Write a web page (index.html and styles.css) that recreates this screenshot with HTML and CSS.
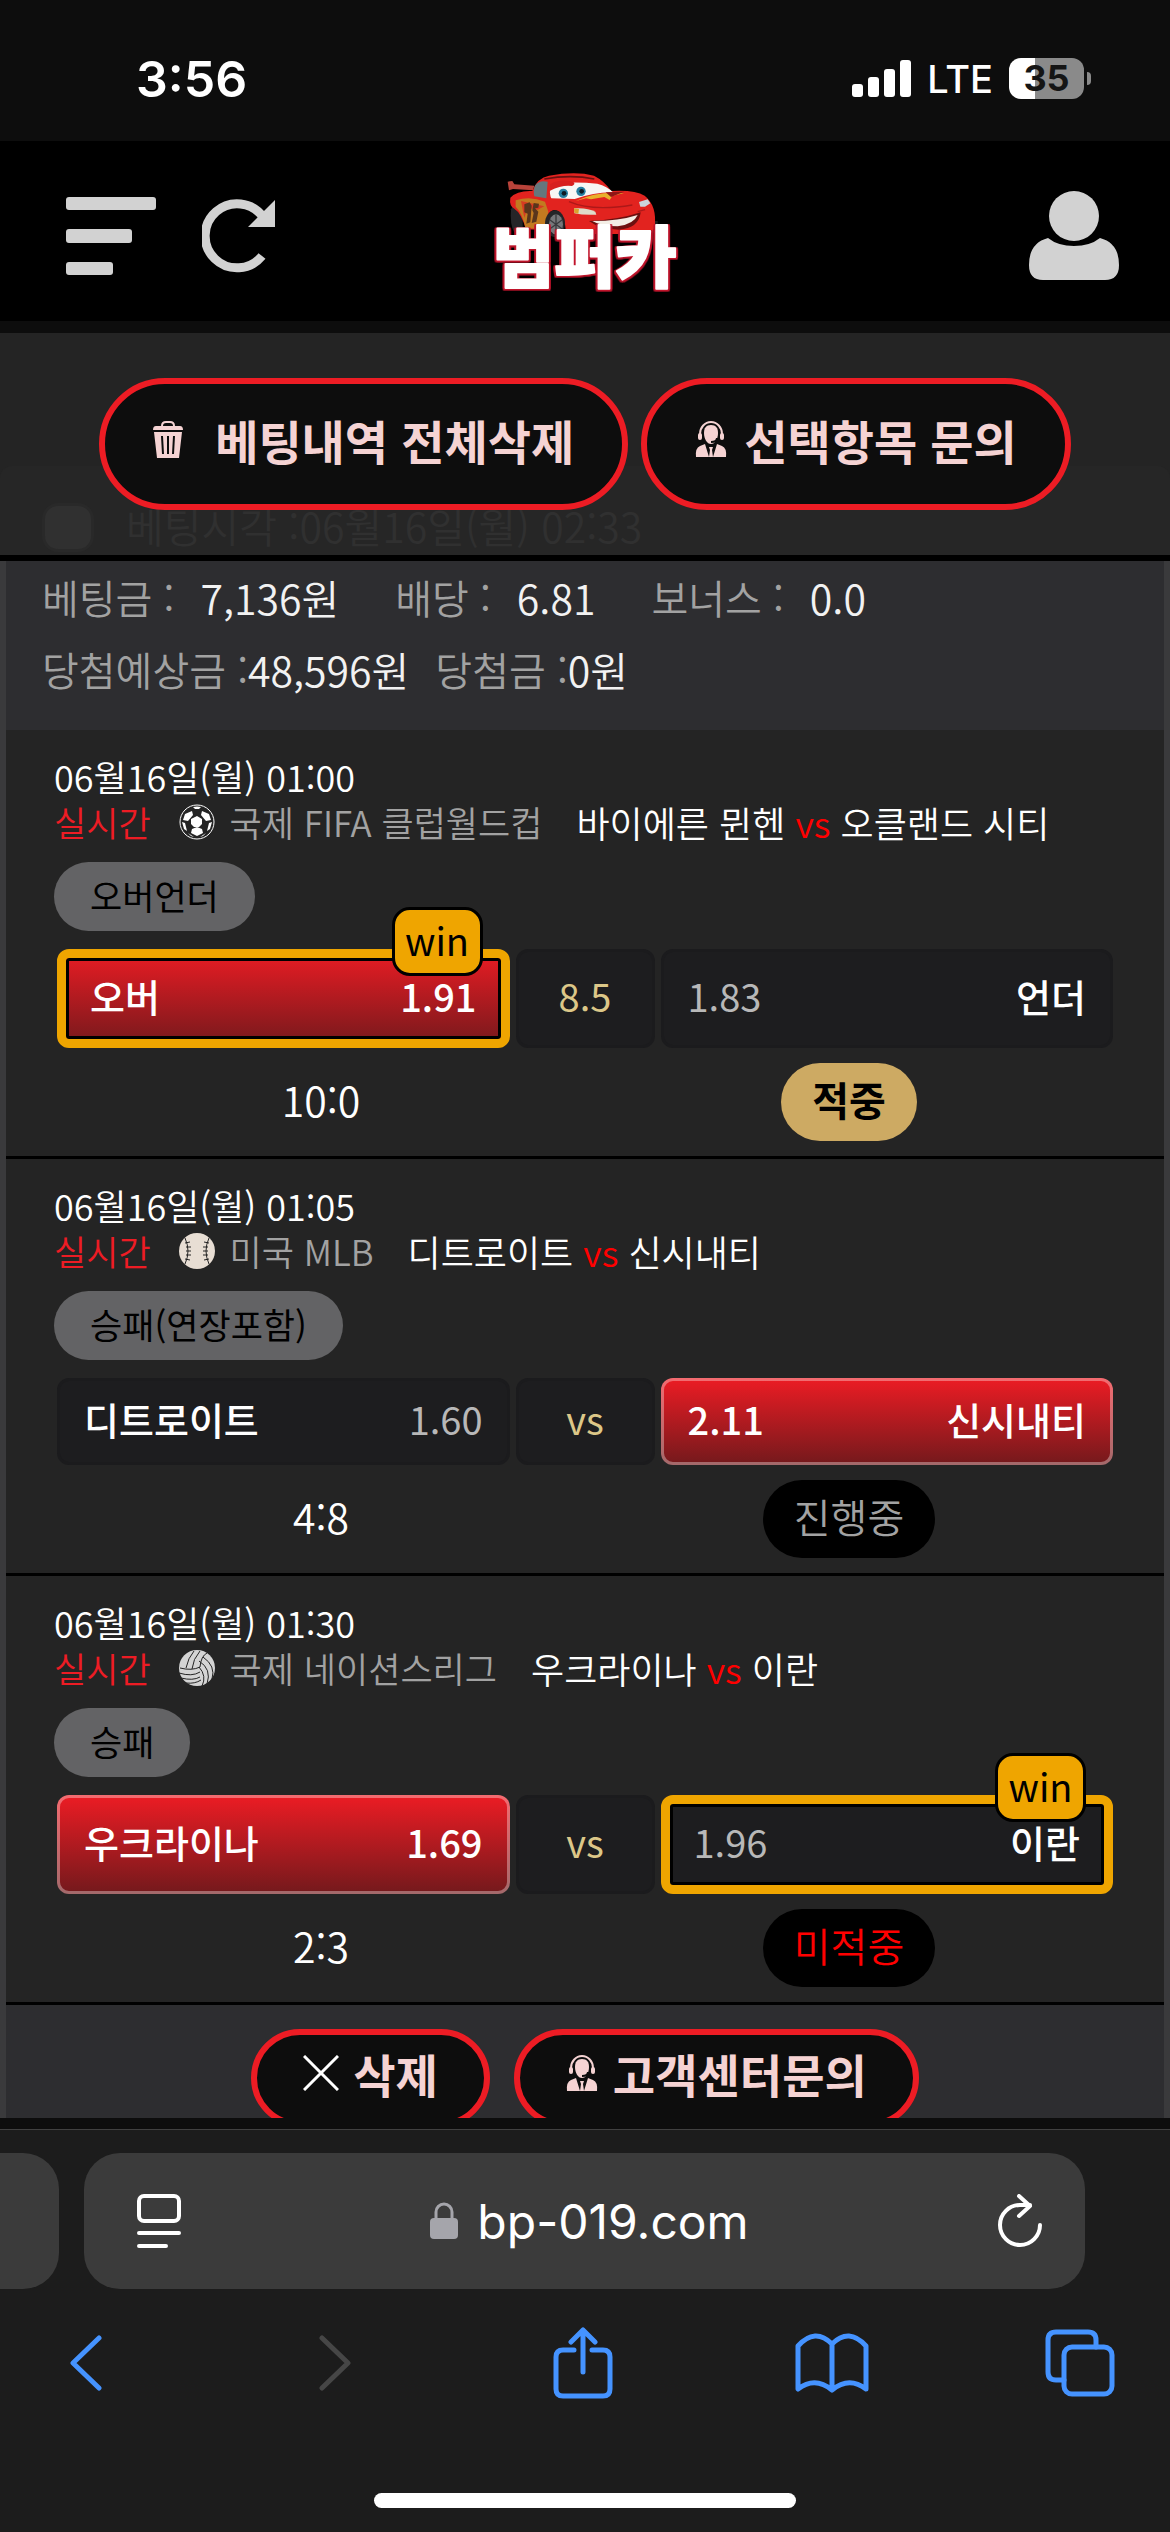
FILE: index.html
```html
<!DOCTYPE html>
<html lang="ko">
<head>
  <meta charset="UTF-8">
  <meta name="viewport" content="width=device-width, initial-scale=1.0">
  <title>범퍼카 - 베팅내역</title>
  <link rel="stylesheet" href="styles.css">
</head>
<body>

  <!-- Shared icons -->
  <svg class="sprite" aria-hidden="true">
    <symbol id="icon-agent" viewBox="0 0 33 38">
      <path d="M5 17v-3a11 12 0 0 1 22 0v3" fill="none" stroke="currentColor" stroke-width="2"/>
      <rect x="3" y="13" width="4" height="7" rx="2"/>
      <rect x="25" y="13" width="4" height="7" rx="2"/>
      <path d="M16 5c5 0 7 3 7 8 0 6-3 11-7 11s-7-5-7-11c0-5 2-8 7-8z"/>
      <path d="M22 18c0 3-3 4-6 4" fill="none" stroke="#0d0d0d" stroke-width="2"/>
      <path d="M10 24l4 13H1q-1-9 4-11zM22 24l-4 13h13q1-9-4-11zM14 27h4l-1 3 1 7h-4l1-7z"/>
    </symbol>
  </svg>

  <!-- Phone status bar -->
  <div class="status-bar">
    <span class="clock">3:56</span>
    <div class="status-right">
      <svg width="59" height="38" viewBox="0 0 59 38" fill="#fff">
        <rect x="0" y="24" width="11" height="13" rx="3"/>
        <rect x="16" y="17" width="11" height="20" rx="3"/>
        <rect x="32" y="9" width="11" height="28" rx="3"/>
        <rect x="48" y="0" width="11" height="37" rx="3"/>
      </svg>
      <span class="network">LTE</span>
      <span class="battery">35</span>
    </div>
  </div>

  <!-- Site header -->
  <header class="site-header">
    <div class="header-left">
      <button type="button" class="icon-btn" aria-label="메뉴">
        <svg width="90" height="78" viewBox="0 0 90 78" fill="#d2d2d2">
          <rect width="90" height="13" rx="3"/>
          <rect y="32" width="66" height="14" rx="3"/>
          <rect y="65" width="47" height="13" rx="3"/>
        </svg>
      </button>
      <button type="button" class="icon-btn" aria-label="새로고침">
        <svg width="74" height="74" viewBox="0 0 74 74">
          <path d="M60 57A32 32 0 1 1 61 18" fill="none" stroke="#d2d2d2" stroke-width="9"/>
          <path d="M73 1v27H46z" fill="#d2d2d2"/>
        </svg>
      </button>
    </div>
    <a href="#" class="logo" aria-label="범퍼카">
      <svg width="188" height="118" viewBox="96 66 564 354">
        <path d="M146 92l14-2 6 10 60 4-4 14-60-4-12 4z" fill="#b8433a"/>
        <path d="M156 175q10-25 35-20v90h-25q-14-25-10-70z" fill="#252528"/>
        <path d="M560 210h36v35h-30z" fill="#1e1e20"/>
        <path d="M154 140q20-22 66-20 15-40 50-46 80-14 135 0 30 15 52 46 70-4 100 14 38 30 30 95l-10 20H320q0-70-35-72-25 5-24 60l-60-2q-15-50-35-62-16-8-12-33z" fill="#e2231f"/>
        <path d="M170 148q44-15 88 4l10 30-10 52-58-2q-10-45-30-65z" fill="#c27a20"/>
        <path d="M186 150l70 16-20 10-30-6-10 30z" fill="#d63a22"/>
        <path d="M196 160l16-6 6 10-4 50-12 4 4-30-10-4zM224 156l16 2-2 12-10 2 10 10-6 30-14 4 6-30-4-8z" fill="#5a351c"/>
        <path d="M228 104q12-18 38-12l-4 50-36-6q-4-18 2-32z" fill="#65777d"/>
        <path d="M256 84q80-14 150 0" fill="none" stroke="#6b1111" stroke-width="5"/>
        <path d="M275 138q-10-36 25-42 60-4 115 2 30 8 47 26-50-2-115 20l-70-2z" fill="#f7f7f4"/>
        <path d="M273 100q30-18 70-7 8 6-4 12-30-4-66 14z" fill="#d71f1e"/>
        <circle cx="313" cy="127" r="14" fill="#267fa0"/><circle cx="315" cy="127" r="7" fill="#0d1a22"/>
        <circle cx="366" cy="121" r="14" fill="#267fa0"/><circle cx="368" cy="121" r="7" fill="#0d1a22"/>
        <path d="M350 150q60-30 145-24l-35 9-8 12-16-9-40 7-15-3z" fill="#e8b12a"/>
        <path d="M440 124l56-2-40 16z" fill="#8f1616"/>
        <path d="M345 172q40-3 64 10l3 9q-38 2-66-4z" fill="#dfdcc9"/><path d="M345 172l15 2-2 14-12-3z" fill="#dba12b"/>
        <path d="M540 153l26-8 8 12-16 10h-14z" fill="#cbd5dc"/>
        <path d="M390 210q90-4 155-26-5 48-65 52-60-2-90-26z" fill="#6e1010"/>
        <path d="M400 210q80 0 136-18-12 28-60 34-50 0-76-16z" fill="#f3eee6"/>
        <path d="M536 182l22-6M330 152q70 30 190 10" fill="none" stroke="#ad1818" stroke-width="4"/>
        <ellipse cx="288" cy="218" rx="30" ry="40" fill="#252528"/>
        <ellipse cx="291" cy="220" rx="21" ry="30" fill="#77777a"/>
        <path d="M291 190v60M272 206l38 28M310 206l-38 28" stroke="#3a3a3d" stroke-width="4"/>
        <text class="logo-text" x="377" y="394" text-anchor="middle">범퍼카</text>
      </svg>
    </a>
    <button type="button" class="icon-btn" aria-label="내 정보">
      <svg width="90" height="90" viewBox="0 0 90 90" fill="#d2d2d2">
        <circle cx="45" cy="25" r="25"/>
        <path d="M19 47q10 8 26 8t26-8q19 5 19 27 0 15-14 15H14Q0 89 0 74 0 52 19 47z"/>
      </svg>
    </button>
  </header>

  <!-- Betting history -->
  <main class="content">
    <section class="actions">
      <label class="bet-time"><input type="checkbox">베팅시각 :<span>06월16일(월) 02:33</span></label>
      <button type="button" class="pill-btn wide">
        <svg width="30" height="37" viewBox="0 0 30 37" fill="currentColor">
          <path d="M9 5q0-4 4-4h4q4 0 4 4" fill="none" stroke="currentColor" stroke-width="2"/>
          <path d="M3 5h24q3 0 3 4H0q0-4 3-4zM1 11h28l-3 26H4z"/>
          <path d="M9 15l1 18M15 15v18M21 15l-1 18" stroke="#0d0d0d" stroke-width="2"/>
        </svg>
        베팅내역 전체삭제
      </button>
      <button type="button" class="pill-btn">
        <svg width="33" height="38" fill="currentColor"><use href="#icon-agent"/></svg>
        선택항목 문의
      </button>
    </section>

    <section class="ticket">
      <div class="summary">
        <div class="summary-row">
          <p><span class="label">베팅금 :</span><span>7,136원</span></p>
          <p><span class="label">배당 :</span><span>6.81</span></p>
          <p><span class="label">보너스 :</span><span>0.0</span></p>
        </div>
        <div class="summary-row tight">
          <p><span class="label">당첨예상금 :</span><span>48,596원</span></p>
          <p><span class="label">당첨금 :</span><span>0원</span></p>
        </div>
      </div>

      <article class="match">
        <div class="match-date">06월16일(월) 01:00</div>
        <div class="match-title">
          <span class="live">실시간</span>
          <svg width="36" height="36" viewBox="0 0 36 36">
            <circle cx="18" cy="18" r="17" fill="#242424" stroke="#fff" stroke-width="1"/>
            <path d="M18 12l5 3v5l-3 3h-5l-3-3v-5zM6 10l7-3 1 4-5 6-5-1zM30 10l-7-3-1 4 5 6 5-1zM3 18l3 1 2 8-3-2zM33 18l-3 1-2 8 3-2zM13 25l5-2 5 2 1 4-6 3-6-3zM14 3q4-1 8 0l-2 2h-4zM9 29l3 3 3 1zM27 29l-3 3-3 1z" fill="#fff"/>
          </svg>
          <span class="league">국제 FIFA 클럽월드컵</span>
          <span class="teams">바이에른 뮌헨 <em>vs</em> 오클랜드 시티</span>
        </div>
        <span class="market">오버언더</span>
        <div class="odds">
          <div class="option picked win"><span>오버</span><span class="rate">1.91</span><b class="badge">win</b></div>
          <div class="option middle">8.5</div>
          <div class="option"><span class="rate">1.83</span><span>언더</span></div>
        </div>
        <div class="result">
          <span class="score">10:0</span>
          <span class="state hit">적중</span>
        </div>
      </article>

      <article class="match">
        <div class="match-date">06월16일(월) 01:05</div>
        <div class="match-title">
          <span class="live">실시간</span>
          <svg width="36" height="36" viewBox="0 0 36 36">
            <circle cx="18" cy="18" r="18" fill="#e8ded4"/>
            <path d="M6 5q6 13 0 26M30 5q-6 13 0 26" fill="none" stroke="#242424" stroke-width="1"/>
            <path d="M6 10l5-1M7 14h5M7 18h5M7 22h5M6 26l5 1M30 10l-5-1M29 14h-5M29 18h-5M29 22h-5M30 26l-5 1" stroke="#242424" stroke-width="1"/>
          </svg>
          <span class="league">미국 MLB</span>
          <span class="teams">디트로이트 <em>vs</em> 신시내티</span>
        </div>
        <span class="market">승패(연장포함)</span>
        <div class="odds">
          <div class="option"><span>디트로이트</span><span class="rate">1.60</span></div>
          <div class="option middle">vs</div>
          <div class="option picked"><span class="rate">2.11</span><span>신시내티</span></div>
        </div>
        <div class="result">
          <span class="score">4:8</span>
          <span class="state">진행중</span>
        </div>
      </article>

      <article class="match">
        <div class="match-date">06월16일(월) 01:30</div>
        <div class="match-title">
          <span class="live">실시간</span>
          <svg width="36" height="36" viewBox="0 0 36 36">
            <circle cx="18" cy="18" r="18" fill="#d4d4d4"/>
            <path d="M1 18q12 3 20-1Q22 6 28 3M7 18Q9 8 15 1M13 19Q14 9 21 1M0 23q13 4 21-1M2 28q12 3 19-1M7 33q9 1 15-3M20 11q13 8 8 23M24 7q13 9 9 22M20 17q8 9 3 19" fill="none" stroke="#242424" stroke-width="1"/>
          </svg>
          <span class="league">국제 네이션스리그</span>
          <span class="teams">우크라이나 <em>vs</em> 이란</span>
        </div>
        <span class="market">승패</span>
        <div class="odds">
          <div class="option picked"><span>우크라이나</span><span class="rate">1.69</span></div>
          <div class="option middle">vs</div>
          <div class="option win"><span class="rate">1.96</span><span>이란</span><b class="badge">win</b></div>
        </div>
        <div class="result">
          <span class="score">2:3</span>
          <span class="state miss">미적중</span>
        </div>
      </article>

      <div class="ticket-footer">
        <button type="button" class="pill-btn small">
          <svg width="36" height="36" viewBox="0 0 36 36"><path d="M1 1l34 34M35 1L1 35" stroke="#fff" stroke-width="3"/></svg>
          삭제
        </button>
        <button type="button" class="pill-btn small">
          <svg width="33" height="38" fill="currentColor"><use href="#icon-agent"/></svg>
          고객센터문의
        </button>
      </div>
    </section>
  </main>

  <!-- Browser bars -->
  <footer class="browser">
    <div class="address-row">
      <div class="prev-tab"></div>
      <div class="address">
        <button type="button" class="icon-btn" aria-label="페이지 설정">
          <svg width="46" height="54" viewBox="0 0 46 54" fill="none" stroke="#fff" stroke-width="4" stroke-linecap="round">
            <rect x="3" y="2" width="40" height="25" rx="5"/>
            <path d="M3 39h40M3 52h27"/>
          </svg>
        </button>
        <a href="#" class="url">
          <svg width="28" height="38" viewBox="0 0 28 38">
            <path d="M6 18v-8a8 8 0 0 1 16 0v8" fill="none" stroke="#a5a5ab" stroke-width="3"/>
            <rect x="0" y="16" width="28" height="21" rx="4" fill="#a5a5ab"/>
          </svg>
          bp-019.com
        </a>
        <button type="button" class="icon-btn" aria-label="다시 로드">
          <svg width="46" height="54" viewBox="0 0 46 54" fill="none" stroke="#fff" stroke-width="4" stroke-linecap="round" stroke-linejoin="round">
            <path d="M43 31a20 20 0 1 1-20-20h10"/>
            <path d="M22 2l11 10-11 10"/>
          </svg>
        </button>
      </div>
    </div>
    <nav class="toolbar">
      <button type="button" class="icon-btn" aria-label="뒤로">
        <svg width="34" height="56" viewBox="0 0 34 56"><path d="M30 3L4 28l26 25"/></svg>
      </button>
      <button type="button" class="icon-btn" aria-label="앞으로" disabled>
        <svg width="34" height="56" viewBox="0 0 34 56"><path d="M4 3l26 25L4 53"/></svg>
      </button>
      <button type="button" class="icon-btn" aria-label="공유">
        <svg width="60" height="72" viewBox="0 0 60 72"><path d="M21 23H10q-7 0-7 7v32q0 7 7 7h40q7 0 7-7V30q0-7-7-7H39M30 45V3M18 15L30 3l12 12"/></svg>
      </button>
      <button type="button" class="icon-btn" aria-label="책갈피">
        <svg width="74" height="60" viewBox="0 0 74 60"><path d="M37 57Q20 43 3 56V13Q20-6 37 11Q54-6 71 13v43Q54 43 37 57V11"/></svg>
      </button>
      <button type="button" class="icon-btn" aria-label="탭">
        <svg width="70" height="68" viewBox="0 0 70 68"><rect x="19" y="18" width="48" height="47" rx="8"/><path d="M19 51h-8q-8 0-8-8V11q0-8 8-8h32q8 0 8 8v7"/></svg>
      </button>
    </nav>
    <div class="home-bar"></div>
  </footer>

</body>
</html>
```
FILE: styles.css
```css
* {
  box-sizing: border-box;
}

body {
  margin: 0;
  height: 100vh;
  display: flex;
  flex-direction: column;
  overflow: hidden;
  background-color: #0d0d0d;
  color: #fff;
  font-family: "Noto Sans CJK KR", sans-serif;
  font-weight: 350;
}

p {
  margin: 0;
}

button {
  font-family: inherit;
  cursor: pointer;
}

svg {
  display: block;
  flex-shrink: 0;
}

.sprite {
  position: absolute;
  width: 0;
  height: 0;
}

.icon-btn {
  padding: 0;
  border: none;
  background: none;
}

/* Status bar */
.status-bar {
  flex-shrink: 0;
  height: 141px;
  padding: 16px 86px 0 136px;
  display: flex;
  align-items: center;
  justify-content: space-between;
  font-family: Inter, sans-serif;
}

.clock {
  font-size: 50px;
  font-weight: 600;
}

.status-right {
  display: flex;
  align-items: center;
  gap: 16px;
}

.network {
  font-size: 38px;
  font-weight: 500;
  line-height: 40px;
}

.battery {
  position: relative;
  width: 75px;
  line-height: 41px;
  border-radius: 12px;
  background: linear-gradient(90deg, #fff 35%, #8a8a8a 35%);
  color: #151515;
  font-size: 36px;
  font-weight: 700;
  text-align: center;
}

.battery::after {
  content: "";
  position: absolute;
  left: 78px;
  top: 14px;
  width: 4px;
  height: 13px;
  border-radius: 0 4px 4px 0;
  background: #8a8a8a;
}

/* Site header */
.site-header {
  flex-shrink: 0;
  height: 180px;
  padding: 10px 51px 0;
  display: grid;
  grid-template-columns: 1fr auto 1fr;
  align-items: center;
  background: #000;
}

.header-left {
  display: flex;
  align-items: center;
  gap: 46px;
  padding-left: 15px;
}

.site-header > .icon-btn {
  justify-self: end;
}

.logo {
  padding-bottom: 8px;
}

.logo svg {
  overflow: visible;
}

.logo-text {
  font-size: 200px;
  font-weight: 900;
  fill: #fff;
  stroke: #fff;
  stroke-width: 6px;
  stroke-linejoin: round;
  filter: drop-shadow(5px 0 0 #c0142b) drop-shadow(-5px 0 0 #c0142b) drop-shadow(0 5px 0 #c0142b);
}

/* Main content */
.content {
  flex: 1;
  min-height: 0;
  overflow: hidden;
  padding-top: 12px;
}

.actions {
  position: relative;
  display: flex;
  justify-content: center;
  gap: 13px;
  padding: 45px 0;
  background: #242424;
  border-bottom: 6px solid #000;
}

.pill-btn {
  position: relative;
  display: flex;
  align-items: center;
  gap: 16px;
  height: 132px;
  padding: 0 48px 10px;
  border: 6px solid #ed1c24;
  border-radius: 66px;
  background: #0d0d0d;
  color: #f5d3d3;
  font-size: 47px;
  font-weight: 700;
}

.pill-btn.wide {
  gap: 32px;
}

.pill-btn.small {
  height: 98px;
  gap: 14px;
  padding: 0 46px 10px;
  font-size: 46px;
}

/* Faded ticket head behind the buttons */
.bet-time {
  position: absolute;
  left: 0;
  right: 0;
  bottom: 0;
  height: 89px;
  padding: 33px 42px 0;
  display: flex;
  border-radius: 12px 12px 0 0;
  background: #262626;
  color: #303030;
  font-size: 41px;
  line-height: 52px;
}

.bet-time input {
  appearance: none;
  width: 52px;
  height: 49px;
  margin: 4px 32px 0 0;
  border: 3px solid #292929;
  border-radius: 16px;
  background: #303030;
}

.ticket {
  border: solid #3a3a3c;
  border-width: 0 6px;
}

.summary {
  padding: 0 36px 25px;
  background: #2d2d30;
  color: #f2f2f2;
  font-size: 41px;
  line-height: 72px;
}

.summary-row {
  display: flex;
  gap: 56px;
}

.summary-row p {
  display: flex;
  gap: 26px;
}

.summary-row.tight {
  gap: 26px;
}

.summary-row.tight p {
  gap: 0;
}

.label {
  color: #a2a2a2;
  font-size: 40px;
}

.match {
  padding: 23px 51px 15px;
  background: #242424;
  border-bottom: 3px solid #000;
}

.match-date {
  margin-left: -3px;
  font-size: 36px;
  line-height: 46px;
}

.match-title {
  display: flex;
  align-items: center;
  margin-left: -3px;
  font-size: 35px;
  line-height: 46px;
  white-space: nowrap;
}

.live {
  margin-right: 28px;
  color: #ed1c24;
}

.league {
  margin: 0 34px 0 15px;
  color: #a2a2a2;
}

.teams {
  font-size: 36px;
}

.teams em {
  color: #f00;
  font-style: normal;
}

.market {
  display: block;
  width: fit-content;
  margin: 17px 0 18px -3px;
  padding: 0 36px 4px;
  border-radius: 35px;
  background: #636365;
  color: #000;
  font-size: 35px;
  font-weight: 400;
  line-height: 65px;
}

.odds {
  display: grid;
  grid-template-columns: 1fr 139px 1fr;
  gap: 6px;
  font-size: 38px;
  font-weight: 500;
  line-height: 47px;
}

.option {
  position: relative;
  display: flex;
  align-items: center;
  justify-content: space-between;
  padding: 14px 24px 20px;
  border: 3px solid #1b1b1d;
  border-radius: 12px;
  background: #1d1d1f;
}

.option .rate {
  color: #b8b8b8;
  font-weight: 400;
}

.option.middle {
  justify-content: center;
  color: #dcc788;
  font-weight: 400;
}

.option.picked {
  border-color: rgba(255, 255, 255, 0.35);
  background: linear-gradient(#ed1c24, #73191c) border-box;
}

.option.picked .rate {
  color: #fff;
  font-weight: 500;
}

.option.win {
  border: 9px solid #efa500;
  box-shadow: inset 0 0 0 3px #000;
}

.badge {
  position: absolute;
  top: -51px;
  right: 18px;
  width: 91px;
  padding-bottom: 4px;
  border: 3px solid #000;
  border-radius: 18px;
  background: #efa500;
  color: #000;
  font-size: 38px;
  font-weight: 400;
  line-height: 59px;
  text-align: center;
}

.result {
  display: grid;
  grid-template-columns: 1fr 1fr;
  justify-items: center;
  margin-top: 15px;
  font-size: 40px;
  line-height: 72px;
}

.score {
  font-size: 41px;
}

.state {
  padding: 0 31px 6px;
  border-radius: 39px;
  background: #000;
  color: #a2a2a2;
}

.state.hit {
  background: #cdaa63;
  color: #000;
  font-weight: 700;
}

.state.miss {
  color: #f00;
}

.ticket-footer {
  display: flex;
  justify-content: center;
  gap: 24px;
  padding: 24px 0;
  background: #2d2d30;
}

/* Browser bars */
.browser {
  flex-shrink: 0;
  border-top: 11px solid #0d0d0d;
  background: #1c1c1c;
  font-family: Inter, sans-serif;
}

.address-row {
  display: flex;
  gap: 25px;
  padding: 23px 85px 0 0;
  border-top: 1px solid #404040;
}

.prev-tab {
  width: 59px;
  border-radius: 0 36px 36px 0;
  background: #3b3b3b;
}

.address {
  flex: 1;
  display: flex;
  align-items: center;
  justify-content: space-between;
  height: 136px;
  padding: 0 42px 0 52px;
  border-radius: 36px;
  background: #3b3b3b;
}

.url {
  display: flex;
  align-items: center;
  gap: 19px;
  color: #fff;
  font-size: 48px;
  font-weight: 400;
  text-decoration: none;
}

.toolbar {
  display: flex;
  align-items: center;
  justify-content: space-between;
  padding: 38px 55px 0 51px;
}

.toolbar button {
  display: flex;
  justify-content: center;
  width: 70px;
}

.toolbar svg {
  fill: none;
  stroke: #4593ff;
  stroke-width: 5px;
  stroke-linecap: round;
  stroke-linejoin: round;
}

.toolbar button:disabled svg {
  stroke: #464646;
}

.home-bar {
  width: 36%;
  height: 15px;
  margin: 94px auto 24px;
  border-radius: 8px;
  background: #fff;
}
```
